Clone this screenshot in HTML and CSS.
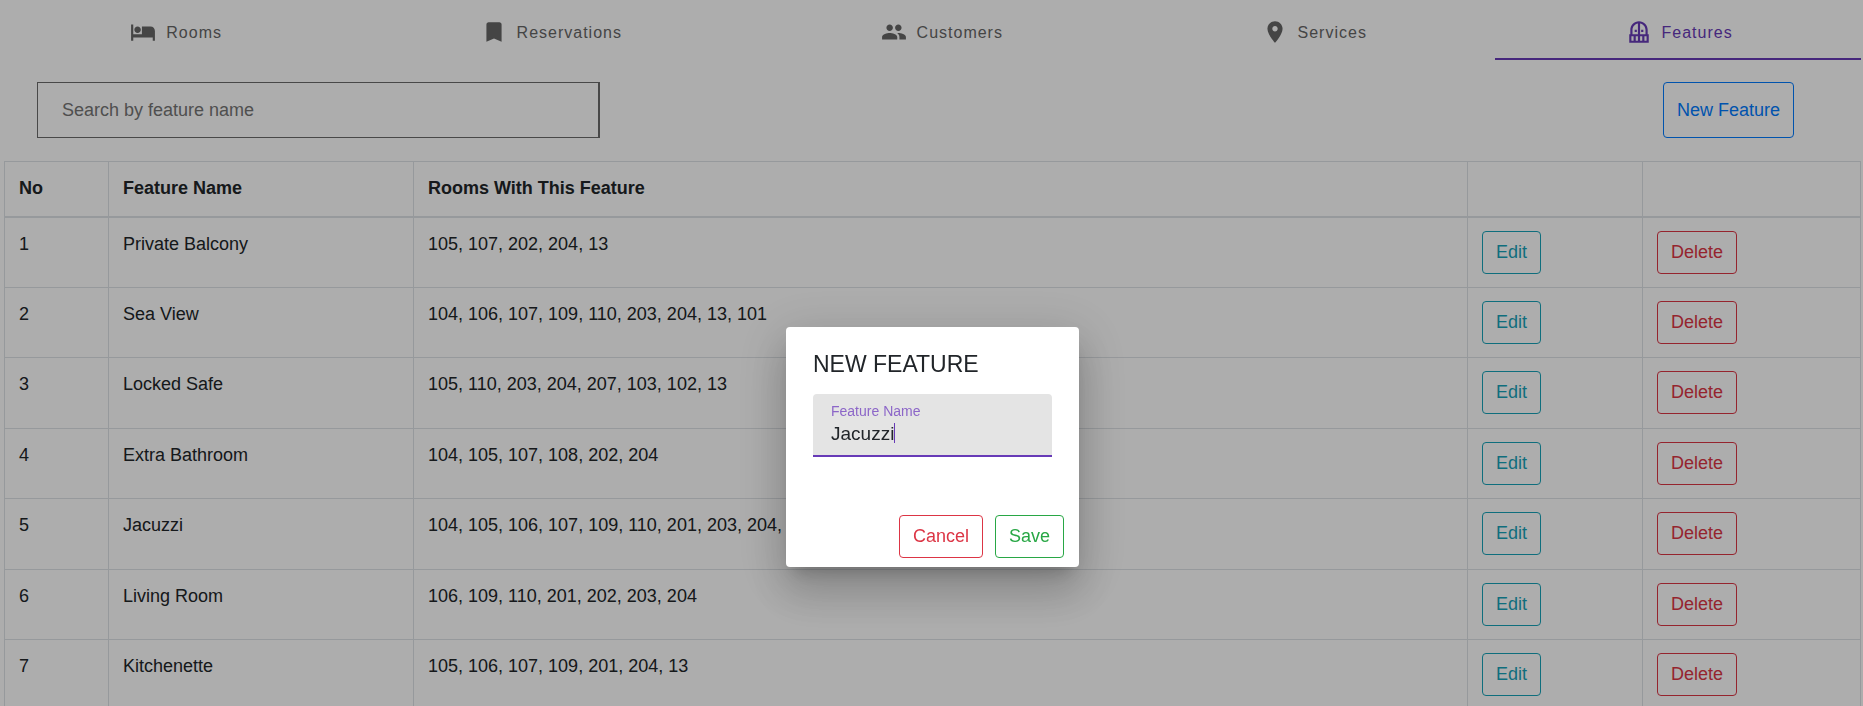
FILE: index.html
```html
<!DOCTYPE html>
<html lang="en">
<head>
<meta charset="utf-8">
<meta name="viewport" content="width=device-width, initial-scale=1">
<title>Features</title>
<link rel="stylesheet" href="styles.css">
</head>
<body>
<div class="page">
  <nav class="tabs">
    <a class="tab" href="#rooms">
      <svg class="tab-icon" viewBox="0 0 24 24" aria-hidden="true"><path d="M7 13c1.66 0 3-1.34 3-3S8.66 7 7 7s-3 1.34-3 3 1.34 3 3 3zm12-6h-8v7H3V5H1v15h2v-3h18v3h2v-9c0-2.21-1.79-4-4-4z"/></svg>
      <span>Rooms</span>
    </a>
    <a class="tab" href="#reservations">
      <svg class="tab-icon" viewBox="0 0 24 24" aria-hidden="true"><path d="M17 3H7c-1.1 0-1.99.9-1.99 2L5 21l7-3 7 3V5c0-1.1-.9-2-2-2z"/></svg>
      <span>Reservations</span>
    </a>
    <a class="tab" href="#customers">
      <svg class="tab-icon" viewBox="0 0 24 24" aria-hidden="true"><path d="M16 11c1.66 0 2.99-1.34 2.99-3S17.66 5 16 5c-1.66 0-3 1.34-3 3s1.34 3 3 3zm-8 0c1.66 0 2.99-1.34 2.99-3S9.66 5 8 5C6.34 5 5 6.34 5 8s1.34 3 3 3zm0 2c-2.33 0-7 1.17-7 3.5V19h14v-2.5c0-2.33-4.67-3.5-7-3.5zm8 0c-.29 0-.62.02-.97.05 1.16.84 1.97 1.97 1.97 3.45V19h6v-2.5c0-2.33-4.67-3.5-7-3.5z"/></svg>
      <span>Customers</span>
    </a>
    <a class="tab" href="#services">
      <svg class="tab-icon" viewBox="0 0 24 24" aria-hidden="true"><path d="M12 2C8.13 2 5 5.13 5 9c0 5.25 7 13 7 13s7-7.75 7-13c0-3.87-3.13-7-7-7zm0 9.5c-1.38 0-2.5-1.12-2.5-2.5s1.12-2.5 2.5-2.5 2.5 1.12 2.5 2.5-1.12 2.5-2.5 2.5z"/></svg>
      <span>Services</span>
    </a>
    <a class="tab tab-active" href="#features" aria-current="page">
      <svg class="tab-icon" viewBox="0 0 24 24" aria-hidden="true"><path d="M10 10v2H8v-2h2zm6 2v-2h-2v2h2zm5 2v8H3v-8h1v-4c0-4.42 3.58-8 8-8s8 3.58 8 8v4h1zM7 16H5v4h2v-4zm4 0H9v4h2v-4zm0-11.92C8.16 4.56 6 7.03 6 10v4h5V4.08zM13 14h5v-4c0-2.97-2.16-5.44-5-5.92V14zm2 2h-2v4h2v-4zm4 0h-2v4h2v-4z"/></svg>
      <span>Features</span>
    </a>
  </nav>

  <div class="toolbar">
    <input class="search" type="search" placeholder="Search by feature name" aria-label="Search by feature name">
    <button class="btn btn-primary btn-tall" type="button">New Feature</button>
  </div>

  <table class="features">
    <colgroup>
      <col class="col-no"><col class="col-name"><col><col class="col-edit"><col class="col-delete">
    </colgroup>
    <thead>
      <tr><th>No</th><th>Feature Name</th><th>Rooms With This Feature</th><th></th><th></th></tr>
    </thead>
    <tbody>
      <tr><td>1</td><td>Private Balcony</td><td>105, 107, 202, 204, 13</td><td><button class="btn btn-info" type="button">Edit</button></td><td><button class="btn btn-danger" type="button">Delete</button></td></tr>
      <tr><td>2</td><td>Sea View</td><td>104, 106, 107, 109, 110, 203, 204, 13, 101</td><td><button class="btn btn-info" type="button">Edit</button></td><td><button class="btn btn-danger" type="button">Delete</button></td></tr>
      <tr><td>3</td><td>Locked Safe</td><td>105, 110, 203, 204, 207, 103, 102, 13</td><td><button class="btn btn-info" type="button">Edit</button></td><td><button class="btn btn-danger" type="button">Delete</button></td></tr>
      <tr><td>4</td><td>Extra Bathroom</td><td>104, 105, 107, 108, 202, 204</td><td><button class="btn btn-info" type="button">Edit</button></td><td><button class="btn btn-danger" type="button">Delete</button></td></tr>
      <tr><td>5</td><td>Jacuzzi</td><td>104, 105, 106, 107, 109, 110, 201, 203, 204,</td><td><button class="btn btn-info" type="button">Edit</button></td><td><button class="btn btn-danger" type="button">Delete</button></td></tr>
      <tr><td>6</td><td>Living Room</td><td>106, 109, 110, 201, 202, 203, 204</td><td><button class="btn btn-info" type="button">Edit</button></td><td><button class="btn btn-danger" type="button">Delete</button></td></tr>
      <tr><td>7</td><td>Kitchenette</td><td>105, 106, 107, 109, 201, 204, 13</td><td><button class="btn btn-info" type="button">Edit</button></td><td><button class="btn btn-danger" type="button">Delete</button></td></tr>
    </tbody>
  </table>
</div>

<div class="scrim">
  <form class="dialog" role="dialog" aria-modal="true" aria-labelledby="dialog-title">
    <h2 class="dialog-title" id="dialog-title">NEW FEATURE</h2>
    <div class="field">
      <label class="field-label" for="feature-name">Feature Name</label>
      <div class="field-row">
        <input class="field-input" id="feature-name" type="text" value="Jacuzzi">
        <span class="caret"></span>
      </div>
    </div>
    <div class="dialog-actions">
      <button class="btn btn-danger" type="button">Cancel</button>
      <button class="btn btn-success" type="button">Save</button>
    </div>
  </form>
</div>
</body>
</html>
```

FILE: styles.css
```css
* {
  box-sizing: border-box;
}

body {
  margin: 0;
  height: 100vh;
  overflow: hidden;
  background: #fff;
  color: #212529;
  font-family: "Liberation Sans", Arial, sans-serif;
  font-size: 18px;
  line-height: 27px;
}

/* Tabs */
.tabs {
  display: flex;
  padding: 6px 2px 0 0;
}

.tab {
  flex: 1 0 auto;
  display: flex;
  align-items: center;
  justify-content: center;
  gap: 10px;
  height: 54px;
  padding-left: 2px;
  border-bottom: 2px solid transparent;
  color: #666;
  font-size: 16px;
  letter-spacing: 1px;
  text-decoration: none;
}

.tab-active {
  border-color: #673ab7;
  color: #673ab7;
}

.tab-icon {
  width: 26px;
  height: 26px;
  fill: currentColor;
}

/* Search and actions */
.toolbar {
  display: flex;
  justify-content: space-between;
  padding: 22px 69px 23px 37px;
}

.search {
  width: 563px;
  height: 56px;
  padding: 0 24px;
  border: 1px solid #6b6b6b;
  border-right-width: 2px;
  border-radius: 0;
  background: transparent;
  color: inherit;
  font: inherit;
  appearance: none;
}

.search::placeholder {
  color: #757575;
  opacity: 1;
}

.btn {
  height: 43px;
  padding: 0 13px;
  border: 1px solid currentColor;
  border-radius: 4px;
  background: transparent;
  font: inherit;
}

.btn-tall {
  height: 56px;
}

.btn-primary {
  color: #007bff;
}

.btn-info {
  color: #17a2b8;
}

.btn-danger {
  color: #dc3545;
}

.btn-success {
  color: #28a745;
}

/* Feature table */
.features {
  width: calc(100% - 6px);
  height: 550px;
  margin: 0 2px 0 4px;
  border-collapse: collapse;
  table-layout: fixed;
}

.col-no {
  width: 104px;
}

.col-name {
  width: 305px;
}

.col-edit {
  width: 175px;
}

.col-delete {
  width: 218px;
}

.features th,
.features td {
  padding: 13px 14px;
  border: 1px solid #dee2e6;
  text-align: left;
  vertical-align: top;
}

.features th {
  height: 55px;
  border-bottom-width: 2px;
}

.features .btn {
  display: block;
}

/* Dialog */
.scrim {
  position: fixed;
  inset: 0;
  display: flex;
  align-items: flex-start;
  justify-content: center;
  padding: 327px 0 0 2px;
  background: rgba(0, 0, 0, 0.32);
}

.dialog {
  width: 293px;
  padding: 20px 15px 9px 27px;
  border-radius: 4px;
  background: #fff;
  box-shadow: 0 12px 16px -8px rgba(0, 0, 0, 0.2), 0 26px 42px 3px rgba(0, 0, 0, 0.14), 0 10px 50px 9px rgba(0, 0, 0, 0.12);
}

.dialog-title {
  margin: 0 0 12px;
  font-size: 23px;
  font-weight: 400;
  line-height: 35px;
}

.field {
  height: 63px;
  margin-right: 12px;
  padding: 8px 18px 0;
  border-bottom: 2px solid #673ab7;
  border-radius: 4px 4px 0 0;
  background: #e4e4e4;
}

.field-label {
  display: block;
  color: #8c66c8;
  font-size: 14px;
  line-height: 18px;
}

.field-row {
  display: flex;
  align-items: center;
  height: 26px;
}

.field-input {
  min-width: 0;
  padding: 0;
  border: 0;
  outline: 0;
  background: transparent;
  color: #212529;
  font: inherit;
  font-size: 19px;
  field-sizing: content;
}

.caret {
  width: 1px;
  height: 20px;
  background: #673ab7;
}

.dialog-actions {
  display: flex;
  justify-content: flex-end;
  gap: 12px;
  margin-top: 58px;
}
```
